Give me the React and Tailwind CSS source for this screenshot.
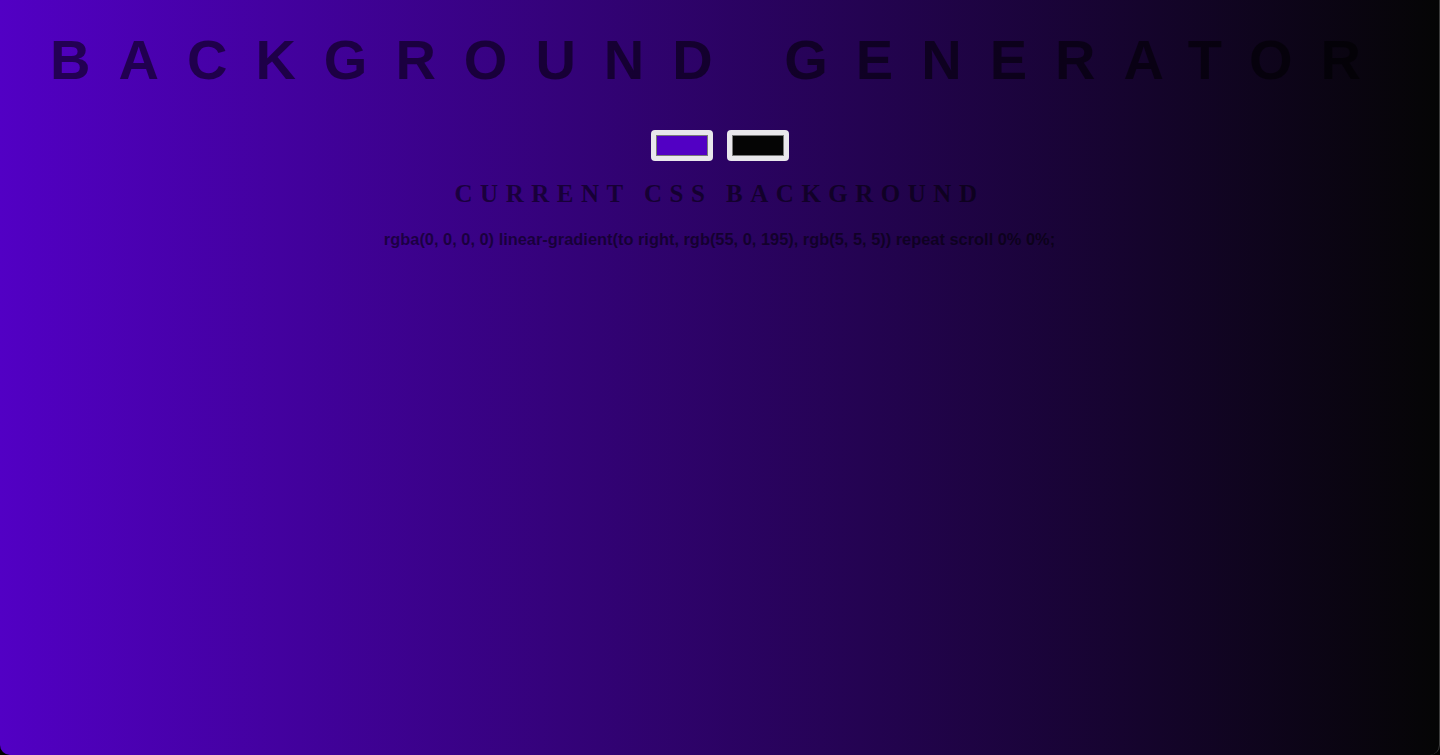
export default function App() {
    const swatches = ['#5200c4', '#050505'];

    return (
        <div className="w-full h-[755px] bg-black overflow-hidden">
            <div className="h-full rounded-b-[10px] border-r border-[#3c3c3c] bg-[linear-gradient(to_right,#5200c4,#050505)] flex flex-col items-center text-black/55">
                <h1 className="mt-[28px] text-[56px] leading-[64px] font-bold tracking-[28px] font-['Liberation_Sans',Arial,sans-serif]">
                    BACKGROUND GENERATOR
                </h1>

                <div className="mt-[38px] flex gap-[14px]">
                    {swatches.map((color) => (
                        <div
                            key={color}
                            className="w-[62px] h-[31px] rounded-[4px] bg-[#e9e7ec] p-[5px] flex"
                        >
                            <div
                                className="flex-1 border border-[#7a7a7a]"
                                style={{ backgroundColor: color }}
                            />
                        </div>
                    ))}
                </div>

                <h3 className="mt-[18px] text-[25px] leading-[30px] font-bold tracking-[7.5px] font-['Liberation_Serif','Times_New_Roman',serif]">
                    CURRENT CSS BACKGROUND
                </h3>

                <p className="mt-[20px] text-[16.4px] leading-[20px] font-bold font-['Liberation_Sans',Arial,sans-serif]">
                    rgba(0, 0, 0, 0) linear-gradient(to right, rgb(55, 0, 195), rgb(5, 5, 5)) repeat scroll 0% 0%;
                </p>
            </div>
        </div>
    );
}
